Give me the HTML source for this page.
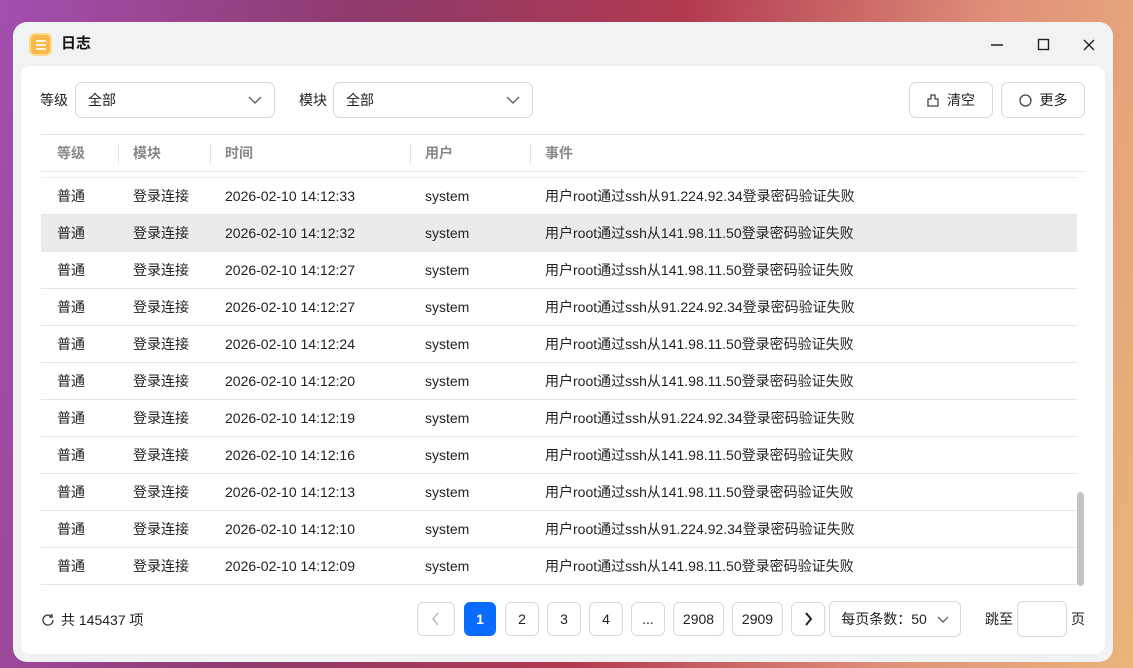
<!DOCTYPE html>
<html><head><meta charset="utf-8"><style>
*{box-sizing:border-box;margin:0;padding:0}
body{width:1133px;height:668px;overflow:hidden;font-family:"Liberation Sans","Noto Sans CJK SC",sans-serif;font-size:14px;color:#222;
background:linear-gradient(100deg,#a24fb0 0%,#8e3a6a 30%,#b23a50 55%,#e0907a 80%,#e9b57a 100%);position:relative}
.win{position:absolute;left:13px;top:22px;width:1100px;height:640px;background:#f1f2f4;border-radius:14px;overflow:hidden}
.title{position:absolute;left:48px;top:12px;font-size:15px;font-weight:bold;color:#111;line-height:20px}
.icon{position:absolute;left:16px;top:11px;width:23px;height:23px;border-radius:6px;background:#f6b94a;border:2px solid #ffd88a}
.icon i{position:absolute;left:5px;width:10px;height:2px;background:#fff3d8}
.panel{position:absolute;left:8px;top:44px;width:1084px;height:588px;background:#fff;border-radius:10px}
.lbl{position:absolute;top:16px;line-height:36px;font-size:14px}
.sel{position:absolute;top:16px;height:36px;width:200px;border:1px solid #d9d9d9;border-radius:7px;padding:0 12px;line-height:34px;font-size:14px}
.sel svg{position:absolute;right:12px;top:12px}
.btn{position:absolute;top:16px;height:36px;border:1px solid #d9d9d9;border-radius:7px;font-size:14px;line-height:34px;text-align:center}
.th{position:absolute;top:68px;left:20px;width:1044px;height:38px;border-top:1px solid #e3e3e3;border-bottom:1px solid #e8e8e8;color:#888;font-weight:bold}
.th span{position:absolute;top:0;line-height:37px}
.th b{position:absolute;top:9px;width:1px;height:20px;background:#e3e3e3}
.row{position:absolute;left:20px;width:1036px;height:37px;border-bottom:1px solid #e6e6e6}
.row span{position:absolute;top:0;line-height:36px;white-space:nowrap}
.pg{position:absolute;top:536px;height:34px;border:1px solid #d9d9d9;border-radius:6px;text-align:center;line-height:32px;font-size:14px}
</style></head><body>
<div class="win">
<div class="icon"><i style="top:5px"></i><i style="top:9px"></i><i style="top:13px"></i></div>
<div class="title">日志</div>
<svg style="position:absolute;left:976px;top:16px" width="16" height="16"><path d="M2 7H14" stroke="#222" stroke-width="1.4"/></svg>
<svg style="position:absolute;left:1023px;top:15px" width="16" height="16"><rect x="2.5" y="2.5" width="10" height="10" fill="none" stroke="#222" stroke-width="1.4"/></svg>
<svg style="position:absolute;left:1068px;top:15px" width="16" height="16"><path d="M3 3L13 13M13 3L3 13" stroke="#222" stroke-width="1.4"/></svg>
<div class="panel">
<div class="lbl" style="left:19px">等级</div>
<div class="sel" style="left:54px">全部<svg width="14" height="10"><path d="M1 2L7 8L13 2" fill="none" stroke="#666" stroke-width="1.5"/></svg></div>
<div class="lbl" style="left:278px">模块</div>
<div class="sel" style="left:312px">全部<svg width="14" height="10"><path d="M1 2L7 8L13 2" fill="none" stroke="#666" stroke-width="1.5"/></svg></div>
<div class="btn" style="left:888px;width:84px"><svg width="12" height="13" style="vertical-align:-2px;margin-right:8px"><path d="M4 1H8V5H11V12H1V5H4Z" fill="none" stroke="#444" stroke-width="1.3"/></svg>清空</div>
<div class="btn" style="left:980px;width:84px"><svg width="13" height="13" style="vertical-align:-2px;margin-right:8px"><circle cx="6.5" cy="6.5" r="5.5" fill="none" stroke="#444" stroke-width="1.3"/></svg>更多</div>
<div class="th"><span style="left:16px">等级</span><b style="left:77px"></b><span style="left:92px">模块</span><b style="left:169px"></b><span style="left:184px">时间</span><b style="left:369px"></b><span style="left:384px">用户</span><b style="left:489px"></b><span style="left:504px">事件</span></div>
<div id="rows"></div>
<div style="position:absolute;left:1056px;top:426px;width:7px;height:94px;background:#c4c4c4;border-radius:4px"></div>
<div style="position:absolute;left:20px;top:537px;line-height:34px;font-size:14px"><svg width="14" height="14" style="vertical-align:-2px;margin-right:6px"><path d="M12 7A5 5 0 1 1 10.5 3.5M11 1V4H8" fill="none" stroke="#444" stroke-width="1.4"/></svg>共 145437 项</div>
<div class="pg" style="left:396px;width:38px"><svg width="10" height="14" style="vertical-align:-2px"><path d="M7 1L2 7L7 13" fill="none" stroke="#bbb" stroke-width="1.5"/></svg></div>
<div class="pg" style="left:443px;width:32px;background:#0a6cff;border-color:#0a6cff;color:#fff;font-weight:bold">1</div>
<div class="pg" style="left:484px;width:34px">2</div>
<div class="pg" style="left:526px;width:34px">3</div>
<div class="pg" style="left:568px;width:34px">4</div>
<div class="pg" style="left:610px;width:34px">...</div>
<div class="pg" style="left:652px;width:51px">2908</div>
<div class="pg" style="left:711px;width:51px">2909</div>
<div class="pg" style="left:770px;width:34px"><svg width="10" height="14" style="vertical-align:-2px"><path d="M3 1L8 7L3 13" fill="none" stroke="#222" stroke-width="2"/></svg></div>
<div class="pg" style="left:808px;width:132px;height:36px;top:535px;line-height:34px">每页条数：50 <svg width="12" height="8" style="margin-left:6px"><path d="M1 1L6 6L11 1" fill="none" stroke="#666" stroke-width="1.4"/></svg></div>
<div style="position:absolute;left:964px;top:535px;line-height:36px">跳至</div>
<div class="pg" style="left:996px;width:50px;height:36px;top:535px"></div>
<div style="position:absolute;left:1050px;top:535px;line-height:36px">页</div>
</div></div>
<script>
var d=[["33","91.224.92.34"],["32","141.98.11.50"],["27","141.98.11.50"],["27","91.224.92.34"],["24","141.98.11.50"],["20","141.98.11.50"],["19","91.224.92.34"],["16","141.98.11.50"],["13","141.98.11.50"],["10","91.224.92.34"],["09","141.98.11.50"]];
var h='<div style="position:absolute;left:20px;top:111px;width:1036px;height:1px;background:#eee"></div>';
d.forEach(function(r,i){h+='<div class="row" style="top:'+(112+37*i)+'px;'+(i==1?'background:#ebebeb':'')+'"><span style="left:16px">普通</span><span style="left:92px">登录连接</span><span style="left:184px">2026-02-10 14:12:'+r[0]+'</span><span style="left:384px">system</span><span style="left:504px">用户root通过ssh从'+r[1]+'登录密码验证失败</span></div>'});
document.getElementById('rows').outerHTML=h;
</script>
</body></html>
